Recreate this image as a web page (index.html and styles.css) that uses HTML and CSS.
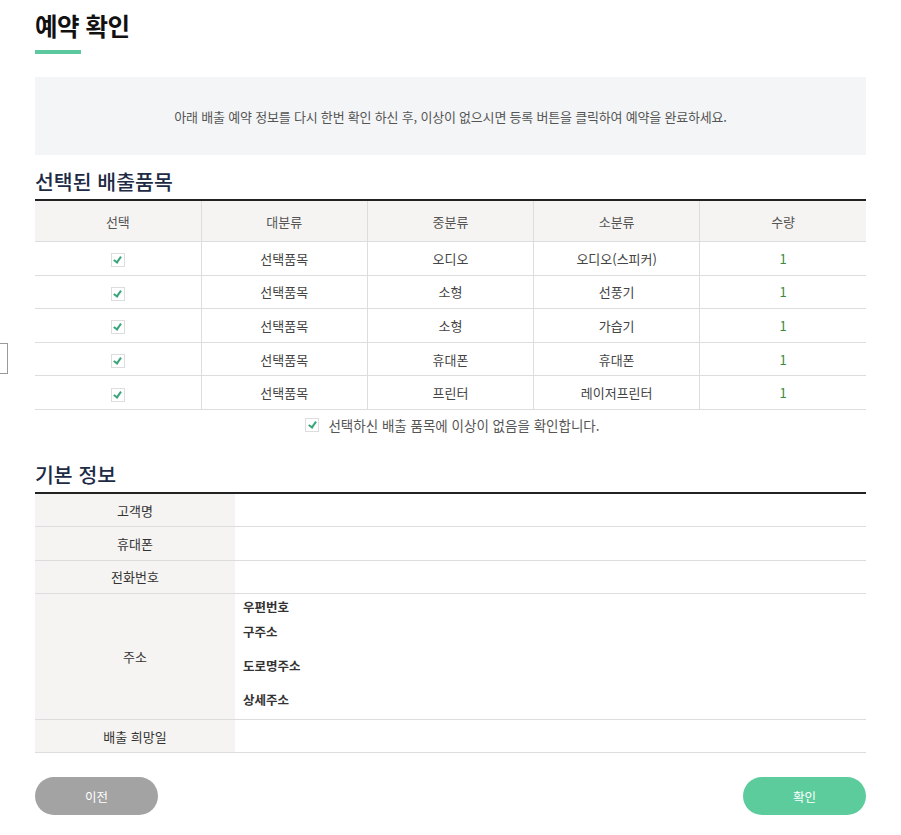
FILE: index.html
```html
<!DOCTYPE html>
<html lang="ko">
<head>
    <meta charset="UTF-8">
    <meta name="viewport" content="width=device-width, initial-scale=1.0">
    <title>예약 확인</title>
    <link rel="stylesheet" href="styles.css">
</head>
<body>
    <input type="text" class="stray-input">
    <div class="container">
        <h1 class="page-title">예약 확인</h1>

        <div class="notice">
            아래 배출 예약 정보를 다시 한번 확인 하신 후, 이상이 없으시면 등록 버튼을 클릭하여 예약을 완료하세요.
        </div>

        <h2 class="section-title">선택된 배출품목</h2>
        <table class="item-table">
            <thead>
                <tr>
                    <th>선택</th>
                    <th>대분류</th>
                    <th>중분류</th>
                    <th>소분류</th>
                    <th>수량</th>
                </tr>
            </thead>
            <tbody>
                <tr>
                    <td><span class="check"></span></td>
                    <td>선택품목</td>
                    <td>오디오</td>
                    <td>오디오(스피커)</td>
                    <td class="qty">1</td>
                </tr>
                <tr>
                    <td><span class="check"></span></td>
                    <td>선택품목</td>
                    <td>소형</td>
                    <td>선풍기</td>
                    <td class="qty">1</td>
                </tr>
                <tr>
                    <td><span class="check"></span></td>
                    <td>선택품목</td>
                    <td>소형</td>
                    <td>가습기</td>
                    <td class="qty">1</td>
                </tr>
                <tr>
                    <td><span class="check"></span></td>
                    <td>선택품목</td>
                    <td>휴대폰</td>
                    <td>휴대폰</td>
                    <td class="qty">1</td>
                </tr>
                <tr>
                    <td><span class="check"></span></td>
                    <td>선택품목</td>
                    <td>프린터</td>
                    <td>레이저프린터</td>
                    <td class="qty">1</td>
                </tr>
            </tbody>
        </table>

        <label class="agree">
            <span class="check"></span>
            선택하신 배출 품목에 이상이 없음을 확인합니다.
        </label>

        <h2 class="section-title section-basic">기본 정보</h2>
        <table class="info-table">
            <tr>
                <th>고객명</th>
                <td></td>
            </tr>
            <tr>
                <th>휴대폰</th>
                <td></td>
            </tr>
            <tr>
                <th>전화번호</th>
                <td></td>
            </tr>
            <tr>
                <th>주소</th>
                <td class="address">
                    <div class="addr-line zip">우편번호</div>
                    <div class="addr-line">구주소</div>
                    <div class="addr-line">도로명주소</div>
                    <div class="addr-line">상세주소</div>
                </td>
            </tr>
            <tr>
                <th>배출 희망일</th>
                <td></td>
            </tr>
        </table>

        <div class="buttons">
            <button class="btn btn-prev">이전</button>
            <button class="btn btn-ok">확인</button>
        </div>
    </div>
</body>
</html>
```

FILE: styles.css
```css
body {
    margin: 0;
    padding: 0;
    font-family: "Noto Sans CJK KR", "Noto Sans", sans-serif;
    color: #333;
    background: #fff;
}

.container {
    width: 831px;
    margin-left: 35px;
    padding-top: 8px;
}

/* 좌측에 살짝 보이는 숨은 입력창 */
.stray-input {
    position: absolute;
    left: -150px;
    top: 343px;
    width: 158px;
    height: 31px;
    box-sizing: border-box;
    border: 1px solid #999;
    margin: 0;
}

.page-title {
    margin: 0;
    font-size: 24.5px;
    font-weight: 700;
    color: #111;
    line-height: 36px;
    letter-spacing: -0.5px;
}

.page-title::after {
    content: "";
    display: block;
    width: 46px;
    height: 4px;
    background: #5bc89e;
    margin-top: 6px;
}

.notice {
    margin-top: 23px;
    height: 78px;
    background: #f4f5f7;
    display: flex;
    justify-content: center;
    align-items: center;
    font-size: 13px;
    color: #555;
    letter-spacing: -0.2px;
}

.section-title {
    margin: 11px 0 0 0;
    font-size: 20.5px;
    font-weight: 500;
    color: #1d2b45;
    line-height: 30px;
    padding-bottom: 3px;
}

.section-title.section-basic {
    margin-top: 24px;
}

table {
    width: 100%;
    border-collapse: collapse;
    border-top: 2px solid #222;
    font-size: 13px;
    color: #444;
}

.item-table {
    table-layout: fixed;
}

.item-table th {
    height: 40px;
    background: #f5f4f2;
    font-weight: 400;
    color: #555;
    border-bottom: 1px solid #ddd;
    border-left: 1px solid #ddd;
    padding: 0;
}

.item-table td {
    height: 32.6px;
    text-align: center;
    border-bottom: 1px solid #ddd;
    border-left: 1px solid #ddd;
    padding: 0;
}

.item-table th:first-child,
.item-table td:first-child {
    border-left: none;
}

.item-table td.qty {
    color: #3c8a3c;
}

.check {
    display: inline-block;
    width: 14px;
    height: 14px;
    border: 1px solid #ddd;
    box-sizing: border-box;
    vertical-align: middle;
    position: relative;
    background: #fff;
}

.check::after {
    content: "";
    position: absolute;
    left: 3.5px;
    top: 1px;
    width: 3px;
    height: 6px;
    border-right: 2px solid #3aa57a;
    border-bottom: 2px solid #3aa57a;
    transform: rotate(35deg);
}

.agree {
    display: flex;
    justify-content: center;
    align-items: center;
    gap: 9px;
    margin-top: 5px;
    font-size: 13.5px;
    color: #555;
    padding-left: 4px;
}

.info-table th {
    width: 200px;
    height: 32.3px;
    background: #f5f4f2;
    font-weight: 400;
    color: #333;
    border-bottom: 1px solid #ddd;
    padding: 0;
}

.info-table td {
    border-bottom: 1px solid #ddd;
    padding: 0 8px;
}

.info-table td.address {
    height: 113px;
    padding: 4px 8px 8px 8px;
    vertical-align: top;
}

.addr-line {
    font-weight: 700;
    font-size: 12.5px;
    color: #333;
    line-height: 18px;
    margin-top: 16px;
}

.addr-line.zip {
    margin-top: 0;
}

.addr-line.zip + .addr-line {
    margin-top: 7px;
}

.buttons {
    display: flex;
    justify-content: space-between;
    margin-top: 24px;
}

.btn {
    width: 123px;
    height: 38px;
    border: none;
    border-radius: 19px;
    color: #fff;
    font-family: inherit;
    font-size: 12.5px;
    cursor: pointer;
}

.btn-prev {
    background: #a3a3a3;
}

.btn-ok {
    background: #5ccc9d;
}
```
